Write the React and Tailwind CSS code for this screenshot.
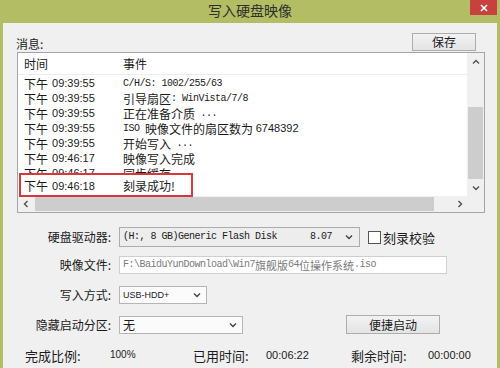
const Chevron = ({ dir = "down", color = "#505050" }) => {
  const d = {
    down: "M1 1.5l3 3 3-3",
    up: "M1 4.5l3-3 3 3",
    left: "M4.5 1l-3 3 3 3",
    right: "M2.5 1l3 3-3 3",
  }[dir];
  const vert = dir === "down" || dir === "up";
  return (
    <svg width={vert ? 8 : 8} height={vert ? 6 : 8} viewBox={vert ? "0 0 8 6" : "0 0 8 8"}>
      <path d={d} stroke={color} strokeWidth="1.4" fill="none" />
    </svg>
  );
};

const rows = [
  ["09:39:55", [["m", "C/H/S: 1002/255/63"]]],
  ["09:39:55", [["c", "引导扇区"], ["m", ": WinVista/7/8"]]],
  ["09:39:55", [["c", "正在准备介质"], ["m", " ..."]]],
  ["09:39:55", [["m", "ISO "], ["c", "映像文件的扇区数为 "], ["s", "6748392"]]],
  ["09:39:55", [["c", "开始写入"], ["m", " ..."]]],
  ["09:46:17", [["c", "映像写入完成"]]],
  ["09:46:17", [["c", "同步缓存"]]],
];

const Seg = ({ t, s }) => {
  if (t === "m")
    return (
      <span className="font-['Liberation_Mono',monospace] text-[10px] tracking-[-0.5px] whitespace-pre">{s}</span>
    );
  if (t === "s")
    return <span className="font-['Liberation_Sans',sans-serif] text-[11px]">{s}</span>;
  return <span className="font-['Noto_Sans_CJK_SC',sans-serif] text-[12px] whitespace-pre">{s}</span>;
};

const TimeCell = ({ time }) => (
  <span className="flex items-center">
    <span className="font-['Noto_Sans_CJK_SC',sans-serif] text-[12px]">下午</span>
    <span className="ml-[4px] font-['Liberation_Sans',sans-serif] text-[11px]">{time}</span>
  </span>
);

export default function App() {
  return (
    <div className="w-[500px] h-[368px] overflow-hidden bg-[#b3bd64] flex flex-col font-['Noto_Sans_CJK_SC',sans-serif] text-[#1b1b1b] leading-none">
      {/* title bar */}
      <div className="relative h-[23px] shrink-0 flex items-center justify-center">
        <span className="text-[14px] text-[#2e2e2e] -mt-[3px]">写入硬盘映像</span>
        <div className="absolute top-0 right-[3px] w-[27px] h-[15px] bg-[#c9413f] flex items-center justify-center">
          <svg width="8" height="8" viewBox="0 0 8 8">
            <path d="M1 1l6 6M7 1l-6 6" stroke="#fff" strokeWidth="1.6" />
          </svg>
        </div>
      </div>

      {/* content */}
      <div className="flex-1 mx-[3px] bg-[#f0f0f0] flex flex-col">
        {/* message header */}
        <div className="mt-[10px] h-[18px] flex items-end justify-between pl-[13px] pr-[21px]">
          <span className="text-[12px] mb-[1px]">消息:</span>
          <button className="w-[64px] h-[18px] border border-[#adadad] bg-gradient-to-b from-[#f2f2f2] to-[#e4e4e4] text-[12px] flex items-center justify-center">
            保存
          </button>
        </div>

        {/* list box */}
        <div className="relative mt-[1px] ml-[14px] w-[468px] h-[161px] border border-[#a5a5a5] bg-white flex flex-col">
          <div className="flex h-[143px]">
            <div className="flex-1 flex flex-col">
              <div className="h-[22px] border-b border-[#ececec] flex items-center text-[12px]">
                <span className="w-[105px] pl-[6px]">时间</span>
                <span>事件</span>
              </div>
              <div className="pt-[1px] flex flex-col">
                {rows.map(([time, segs], i) => (
                  <div key={i} className="h-[15px] flex items-center">
                    <span className="w-[105px] pl-[6px]">
                      <TimeCell time={time} />
                    </span>
                    <span className="flex items-center">
                      {segs.map(([t, s], j) => (
                        <Seg key={j} t={t} s={s} />
                      ))}
                    </span>
                  </div>
                ))}
              </div>
            </div>
            {/* vertical scrollbar */}
            <div className="w-[17px] bg-[#f0f0f0] flex flex-col">
              <div className="h-[17px] flex items-center justify-center">
                <Chevron dir="up" />
              </div>
              <div className="h-[37px]" />
              <div className="h-[72px] mx-[1px] bg-[#cdcdcd]" />
              <div className="h-[17px] flex items-center justify-center">
                <Chevron dir="down" />
              </div>
            </div>
          </div>
          {/* horizontal scrollbar */}
          <div className="h-[16px] flex bg-[#f0f0f0]">
            <div className="w-[17px] flex items-center justify-center">
              <Chevron dir="left" />
            </div>
            <div className="w-[399px] my-[1px] bg-[#cdcdcd]" />
            <div className="w-[17px]" />
            <div className="w-[17px] flex items-center justify-center">
              <Chevron dir="right" />
            </div>
            <div className="flex-1" />
          </div>

          {/* highlight box */}
          <div className="absolute left-[1px] top-[120px] w-[174px] h-[24px] border-2 border-[#d9383a] bg-white flex items-center pt-[2px]">
            <span className="w-[102px] pl-[3px]">
              <TimeCell time="09:46:18" />
            </span>
            <span className="text-[12px]">刻录成功!</span>
          </div>
        </div>

        {/* form */}
        <div className="mt-[14px] flex flex-col text-[12px]">
          <div className="h-[20px] flex items-center">
            <span className="w-[108px] text-right">硬盘驱动器:</span>
            <div className="ml-[8px] w-[241px] h-[20px] border border-[#acacac] bg-[#ededed] flex items-center pl-[3px] pr-[6px]">
              <span className="font-['Liberation_Mono',monospace] text-[10px] tracking-[-0.5px] whitespace-pre flex-1">
                (H:, 8 GB)Generic Flash Disk      8.07
              </span>
              <Chevron dir="down" color="#444" />
            </div>
            <div className="ml-[8px] w-[13px] h-[13px] border border-[#555] bg-white" />
            <span className="ml-[2px] text-[13px]">刻录校验</span>
          </div>

          <div className="mt-[9px] h-[18px] flex items-center">
            <span className="w-[108px] text-right">映像文件:</span>
            <div className="ml-[8px] w-[328px] h-[18px] border border-[#cfcfcf] bg-white flex items-center pl-[3px] text-[#7a7a7a]">
              <span className="font-['Liberation_Mono',monospace] text-[10px] tracking-[-0.5px]">F:\BaiduYunDownload\Win7</span>
              <span className="text-[11px]">旗舰版</span>
              <span className="font-['Liberation_Mono',monospace] text-[10px] tracking-[-0.5px]">64</span>
              <span className="text-[11px]">位操作系统</span>
              <span className="font-['Liberation_Mono',monospace] text-[10px] tracking-[-0.5px]">.iso</span>
            </div>
          </div>

          <div className="mt-[12px] h-[18px] flex items-center">
            <span className="w-[108px] text-right">写入方式:</span>
            <div className="ml-[8px] w-[88px] h-[18px] border border-[#b5b5b5] bg-[#fbfbfb] flex items-center pl-[3px] pr-[5px]">
              <span className="font-['Liberation_Sans_Narrow','Liberation_Sans',sans-serif] text-[9px] flex-1">USB-HDD+</span>
              <Chevron dir="down" color="#444" />
            </div>
          </div>

          <div className="mt-[11px] h-[19px] flex items-center">
            <span className="w-[108px] text-right">隐藏启动分区:</span>
            <div className="ml-[8px] w-[124px] h-[18px] border border-[#b5b5b5] bg-[#fbfbfb] flex items-center pl-[3px] pr-[5px]">
              <span className="flex-1 text-[12px]">无</span>
              <Chevron dir="down" color="#444" />
            </div>
            <button className="ml-[103px] w-[94px] h-[19px] border border-[#adadad] bg-gradient-to-b from-[#f2f2f2] to-[#e4e4e4] text-[12px] flex items-center justify-center">
              便捷启动
            </button>
          </div>

          <div className="mt-[14px] h-[14px] flex items-center text-[13px]">
            <span className="ml-[22px] w-[85px]">完成比例:</span>
            <span className="w-[83px] font-['Liberation_Sans',sans-serif] text-[10px]">100%</span>
            <span className="w-[73px]">已用时间:</span>
            <span className="w-[85px] font-['Liberation_Sans',sans-serif] text-[11px]">00:06:22</span>
            <span className="w-[77px]">剩余时间:</span>
            <span className="font-['Liberation_Sans',sans-serif] text-[11px]">00:00:00</span>
          </div>
        </div>
      </div>
    </div>
  );
}
